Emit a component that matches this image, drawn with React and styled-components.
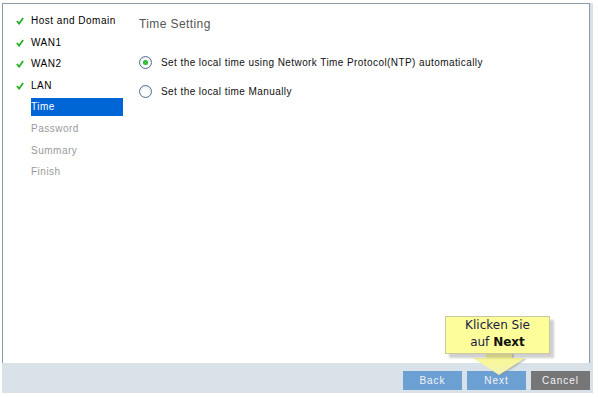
import React from "react";
import styled, { createGlobalStyle } from "styled-components";

const Global = createGlobalStyle`
  html, body { margin: 0; padding: 0; background: #fff; }
  body { font-family: "Liberation Sans", Arial, sans-serif; }
`;

const Frame = styled.div`
  position: relative;
  margin: 3px 0 0 2px;
  width: 591px;
  height: 390px;
  background: #dae2e9;
  display: flex;
  flex-direction: column;
`;

const Panel = styled.div`
  width: 586px;
  height: 359px;
  background: #fff;
  border-top: 1px solid #8c9ba6;
  border-left: 1px solid #8c9ba6;
  border-right: 1px solid #8c9ba6;
  display: flex;
`;

const Sidebar = styled.ul`
  list-style: none;
  margin: 0;
  padding: 8px 0 0 0;
  width: 135px;
  flex: none;
`;

const NavItem = styled.li`
  display: flex;
  align-items: center;
  height: 18px;
  margin-bottom: 3.6px;
  padding-left: 13px;
  font-size: 10px;
  letter-spacing: 0.5px;
  color: ${(p) => (p.$done ? "#000" : p.$active ? "#fff" : "#9a9a9a")};
`;

const CheckBox = styled.span`
  width: 15px;
  flex: none;
  display: flex;
  align-items: center;
`;

const Label = styled.span`
  height: 18px;
  line-height: 18px;
  width: 92px;
  background: ${(p) => (p.$active ? "#0066d6" : "transparent")};
`;

const Main = styled.div`
  flex: 1;
  padding: 12px 0 0 1px;
`;

const Title = styled.h1`
  margin: 0 0 23px 0;
  font-size: 12px;
  font-weight: normal;
  color: #555;
  letter-spacing: 0.4px;
  line-height: 16px;
`;

const Option = styled.label`
  display: flex;
  align-items: center;
  height: 14px;
  margin-bottom: 15px;
  font-size: 10px;
  letter-spacing: 0.42px;
  color: #111;
`;

const Radio = styled.span`
  width: 11px;
  height: 11px;
  border-radius: 50%;
  border: 1px solid #52708c;
  background: radial-gradient(circle at 50% 60%, #fff 30%, #dde3e8 100%);
  margin-right: 9px;
  display: flex;
  align-items: center;
  justify-content: center;
  &::after {
    content: "";
    width: 5px;
    height: 5px;
    border-radius: 50%;
    background: ${(p) => (p.$checked ? "radial-gradient(circle, #3fd33f, #1a9a1a)" : "transparent")};
  }
`;

const Footer = styled.div`
  flex: 1;
  display: flex;
  justify-content: flex-end;
  align-items: flex-start;
  gap: 5px;
  padding: 8px 3px 0 0;
`;

const Button = styled.button`
  width: 59px;
  height: 19px;
  border: none;
  padding: 0;
  font-family: "Liberation Sans", Arial, sans-serif;
  font-size: 10px;
  letter-spacing: 1px;
  color: #f2f4f8;
  background: ${(p) => (p.$gray ? "#767676" : "#6c9fd2")};
`;

const Tip = styled.div`
  position: absolute;
  left: 443px;
  top: 313px;
  width: 103px;
  height: 36px;
  background: #fdfd9a;
  border: 1px solid #c9c9a0;
  box-shadow: 4px 4px 2px rgba(120, 120, 120, 0.35);
  font-family: Verdana, "DejaVu Sans", sans-serif;
  font-size: 12px;
  line-height: 17px;
  text-align: center;
  color: #1b1b44;
  b { color: #111; }
`;

const TipArrow = styled.svg`
  position: absolute;
  left: 464px;
  top: 350px;
`;

const Check = () => (
  <svg width="8" height="8" viewBox="0 0 9 9">
    <path d="M1 4.5 L3.5 7.5 L8 1.2" fill="none" stroke="#22b022" strokeWidth="2" />
  </svg>
);

const steps = [
  { t: "Host and Domain", s: "done" },
  { t: "WAN1", s: "done" },
  { t: "WAN2", s: "done" },
  { t: "LAN", s: "done" },
  { t: "Time", s: "active" },
  { t: "Password" },
  { t: "Summary" },
  { t: "Finish" },
];

export default function App() {
  return (
    <>
      <Global />
      <Frame>
        <Panel>
          <Sidebar>
            {steps.map((s) => (
              <NavItem key={s.t} $done={s.s === "done"} $active={s.s === "active"}>
                <CheckBox>{s.s === "done" && <Check />}</CheckBox>
                <Label $active={s.s === "active"}>{s.t}</Label>
              </NavItem>
            ))}
          </Sidebar>
          <Main>
            <Title>Time Setting</Title>
            <Option>
              <Radio $checked />
              Set the local time using Network Time Protocol(NTP) automatically
            </Option>
            <Option>
              <Radio />
              Set the local time Manually
            </Option>
          </Main>
        </Panel>
        <Footer>
          <Button>Back</Button>
          <Button>Next</Button>
          <Button $gray>Cancel</Button>
        </Footer>
        <TipArrow width="62" height="24" viewBox="0 0 62 24">
          <defs>
            <linearGradient id="ag" x1="0" y1="0" x2="0" y2="1">
              <stop offset="0" stopColor="#fafa8c" />
              <stop offset="1" stopColor="#f3f3b4" />
            </linearGradient>
          </defs>
          <path d="M20 0 L46 0 L46 5 L59 5 L33 22 L7 5 L20 5 Z" fill="#8a8a8a" opacity="0.4" transform="translate(2 1)" />
          <path d="M20 0 L46 0 L46 5 L59 5 L33 22 L7 5 L20 5 Z" fill="url(#ag)" />
        </TipArrow>
        <Tip>
          Klicken Sie
          <br />
          auf <b>Next</b>
        </Tip>
      </Frame>
    </>
  );
}
